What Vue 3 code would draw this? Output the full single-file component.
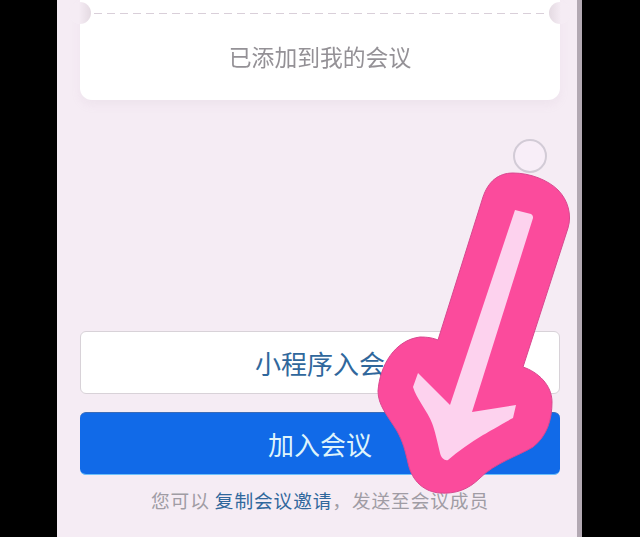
<script setup>
const outer = 'M513 173 C530 173 548 180 558 190 C568 200 572 215 568 228 L523 367 C538 372 552 385 552 402 C552 420 547 436 533 447 C518 456 495 463 480 478 C468 490 455 494 440 493 C425 492 412 482 408 463 C405 450 403 442 397 431 C387 415 378 405 378 391 C380 365 395 340 420 337 C428 337 433 338 438 340 L483 197 C488 182 498 173 513 173 Z'
const inner = 'M515 210 L531 214 C533 215 533 217 533 218 L472 412 L516 405 L513 418 C500 425 490 431 483 435 C470 443 458 451 448 460 C445 461 441 458 440 453 C437 440 435 431 432 423 C428 412 416 398 413 387 L418 373 L450 405 Z'
</script>

<template>
  <div class="screen">
    <main class="phone">
      <section class="ticket">
        <div class="dash"></div>
        <span class="notch left"></span>
        <span class="notch right"></span>
        <p class="added">已添加到我的会议</p>
      </section>
      <div class="actions">
        <button class="btn ghost">小程序入会</button>
        <button class="btn primary">加入会议</button>
        <p class="hint">您可以 <span class="link">复制会议邀请</span>，发送至会议成员</p>
      </div>
    </main>
    <span class="dot"></span>
    <svg class="arrow" viewBox="0 0 640 537" width="640" height="537" aria-hidden="true">
      <path :d="outer" fill="#fb4b9c" stroke="#d8488f" stroke-width="1" />
      <path :d="inner" fill="#fdd2ee" />
    </svg>
  </div>
</template>

<style scoped>
.screen {
  position: relative;
  width: 640px;
  height: 537px;
  overflow: hidden;
  background: #000;
  font-family: "Noto Sans CJK SC", "Liberation Sans", sans-serif;
}
.phone {
  box-sizing: border-box;
  width: 525px;
  height: 537px;
  margin-left: 57px;
  padding: 0 17px 0 23px;
  display: flex;
  flex-direction: column;
  background: #f5ecf4;
  border-right: 5px solid #b3a9b3;
  filter: blur(0.4px);
}
.ticket {
  position: relative;
  height: 100px;
  background: #fff;
  border-radius: 0 0 12px 12px;
  box-shadow: 0 5px 10px rgba(190, 160, 190, 0.1);
  display: flex;
  align-items: center;
  justify-content: center;
}
.dash {
  position: absolute;
  left: 14px;
  right: 14px;
  top: 13px;
  height: 1px;
  background: repeating-linear-gradient(to right, #d9cfd9 0 8px, transparent 8px 13px);
}
.notch {
  position: absolute;
  top: 2px;
  width: 22px;
  height: 22px;
  border-radius: 50%;
}
.notch.left {
  left: -11px;
  background: linear-gradient(to right, #f5ecf4 45%, #e4dae2);
}
.notch.right {
  right: -11px;
  background: linear-gradient(to left, #f5ecf4 45%, #e4dae2);
}
.added {
  margin: 14px 0 0;
  font-size: 22.8px;
  line-height: 32px;
  color: #949196;
}
.actions {
  margin-top: auto;
  display: flex;
  flex-direction: column;
  align-items: stretch;
}
.btn {
  box-sizing: border-box;
  height: 63px;
  border-radius: 6px;
  font-family: inherit;
  font-size: 26px;
  padding: 0;
}
.ghost {
  background: #fff;
  border: 1px solid #d8d2d8;
  color: #30679c;
}
.primary {
  margin-top: 18px;
  background: #116ae8;
  border: 0;
  border-top: 1px solid #3a6cb8;
  border-bottom: 1px solid #6cc0fa;
  color: #dff4fb;
}
.hint {
  margin: 11px 0 23px;
  height: 28px;
  text-align: center;
  font-size: 18.7px;
  letter-spacing: 0.9px;
  line-height: 28px;
  color: #a09ca4;
}
.link { color: #30679c; }
.dot {
  position: absolute;
  left: 513px;
  top: 139px;
  box-sizing: border-box;
  width: 34px;
  height: 34px;
  border-radius: 50%;
  border: 2px solid #d2cbd6;
  background: #f8eef8;
}
.arrow {
  position: absolute;
  left: 0;
  top: 0;
}
</style>
